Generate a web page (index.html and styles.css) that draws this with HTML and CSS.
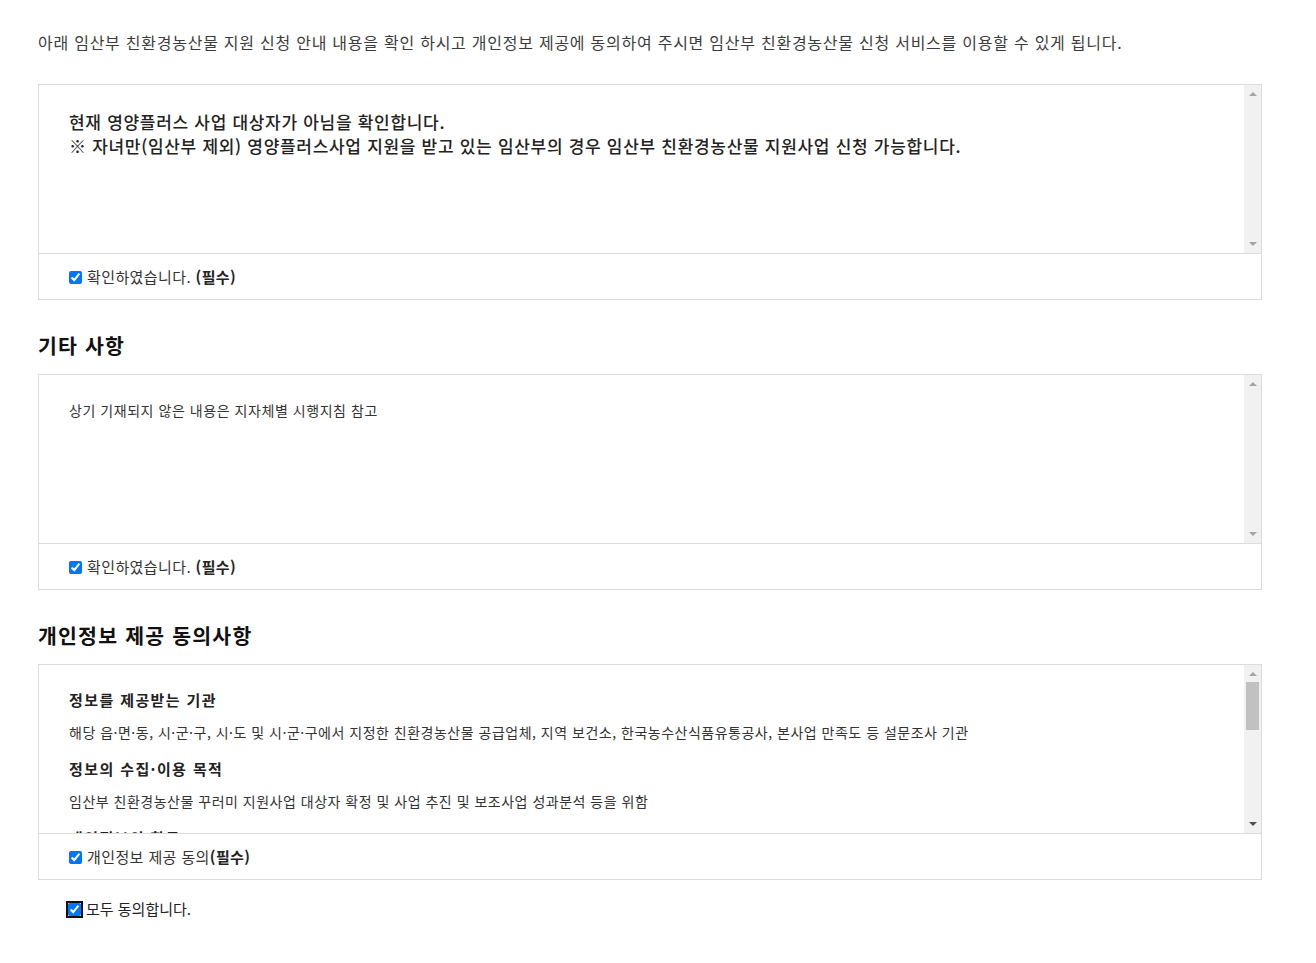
FILE: index.html
```html
<!DOCTYPE html>
<html lang="ko">

<head>
    <meta charset="UTF-8">
    <meta name="viewport" content="width=device-width, initial-scale=1.0">
    <title>임산부 친환경농산물 신청 동의</title>
    <link rel="stylesheet" href="styles.css">
</head>

<body>
    <div class="wrap">
        <p class="intro">아래 임산부 친환경농산물 지원 신청 안내 내용을 확인 하시고 개인정보 제공에 동의하여 주시면 임산부 친환경농산물 신청 서비스를 이용할 수 있게 됩니다.</p>

        <div class="agree-box">
            <div class="agree-body">
                <div class="agree-text">
                    <p class="notice">현재 영양플러스 사업 대상자가 아님을 확인합니다.<br>※ 자녀만(임산부 제외) 영양플러스사업 지원을 받고 있는 임산부의 경우 임산부 친환경농산물 지원사업 신청 가능합니다.</p>
                </div>
                <div class="scroll-bar">
                    <span class="arrow up"></span>
                    <span class="arrow down"></span>
                </div>
            </div>
            <label class="agree-check"><input type="checkbox" checked><span>확인하였습니다.&nbsp;<b>(필수)</b></span></label>
        </div>

        <h3 class="sec-title">기타 사항</h3>
        <div class="agree-box">
            <div class="agree-body">
                <div class="agree-text">
                    <p class="plain">상기 기재되지 않은 내용은 지자체별 시행지침 참고</p>
                </div>
                <div class="scroll-bar">
                    <span class="arrow up"></span>
                    <span class="arrow down"></span>
                </div>
            </div>
            <label class="agree-check"><input type="checkbox" checked><span>확인하였습니다.&nbsp;<b>(필수)</b></span></label>
        </div>

        <h3 class="sec-title">개인정보 제공 동의사항</h3>
        <div class="agree-box">
            <div class="agree-body">
                <div class="agree-text">
                    <dl class="terms">
                        <dt>정보를 제공받는 기관</dt>
                        <dd>해당 읍·면·동, 시·군·구, 시·도 및 시·군·구에서 지정한 친환경농산물 공급업체, 지역 보건소, 한국농수산식품유통공사, 본사업 만족도 등 설문조사 기관</dd>
                        <dt>정보의 수집·이용 목적</dt>
                        <dd>임산부 친환경농산물 꾸러미 지원사업 대상자 확정 및 사업 추진 및 보조사업 성과분석 등을 위함</dd>
                        <dt>개인정보의 항목</dt>
                        <dd>성명, 생년월일, 주소, 연락처, 출산예정일(출산일), 배송지 정보</dd>
                        <dt>개인정보의 보유 및 이용기간</dt>
                        <dd>사업 종료 후 5년간 보관 후 파기</dd>
                    </dl>
                </div>
                <div class="scroll-bar">
                    <span class="arrow up"></span>
                    <span class="thumb"></span>
                    <span class="arrow down on"></span>
                </div>
            </div>
            <label class="agree-check"><input type="checkbox" checked><span>개인정보 제공 동의<b>(필수)</b></span></label>
        </div>

        <label class="agree-all"><input type="checkbox" class="focused" checked><span>모두 동의합니다.</span></label>
    </div>
</body>

</html>
```

FILE: styles.css
```css
body {
    margin: 0;
    padding: 0;
    background-color: #ffffff;
    color: #222;
    font-family: "Noto Sans CJK KR", "Noto Sans", sans-serif;
}

.wrap {
    padding: 30px 54px 40px 38px;
}

.intro {
    margin: 0 0 30px;
    font-size: 16px;
    line-height: 24px;
    letter-spacing: 0.75px;
    color: #3c3c3c;
}

.agree-box {
    border: 1px solid #dcdcdc;
}

.agree-body {
    display: flex;
    height: 168px;
}

.agree-text {
    flex: 1;
    overflow: hidden;
    padding: 0 30px;
}

/* 스크롤바 모양 */
.scroll-bar {
    width: 17px;
    flex-shrink: 0;
    display: flex;
    flex-direction: column;
    align-items: center;
    background-color: #f1f1f1;
}

.arrow {
    width: 0;
    height: 0;
    border-left: 4px solid transparent;
    border-right: 4px solid transparent;
}

.arrow.up {
    margin-top: 7px;
    border-bottom: 4px solid #a3a3a3;
}

.arrow.down {
    margin-top: auto;
    margin-bottom: 7px;
    border-top: 4px solid #a3a3a3;
}

.arrow.down.on {
    border-top-color: #505050;
}

.thumb {
    width: 13px;
    height: 48px;
    margin-top: 6px;
    background-color: #c1c1c1;
}

.notice {
    margin: 25px 0 0;
    font-size: 17px;
    line-height: 24px;
    font-weight: 500;
    letter-spacing: 0.7px;
    color: #222;
}

.plain {
    margin: 23px 0 0;
    font-size: 14px;
    line-height: 24px;
    letter-spacing: 0.55px;
    color: #333;
}

.terms {
    margin: 24px 0 0;
}

.terms dt {
    font-size: 15px;
    line-height: 22px;
    font-weight: 700;
    letter-spacing: 1.4px;
    color: #222;
}

.terms dd {
    margin: 10px 0 15px;
    font-size: 14px;
    line-height: 22px;
    letter-spacing: 0.5px;
    color: #333;
}

.agree-check {
    display: flex;
    align-items: center;
    height: 46px;
    border-top: 1px solid #dcdcdc;
    padding: 0 0 1px 30px;
    box-sizing: border-box;
    font-size: 15px;
    letter-spacing: 0.4px;
    color: #333;
    user-select: none;
}

.agree-check b {
    color: #222;
}

.agree-check input,
.agree-all input {
    width: 13px;
    height: 13px;
    margin: 2px 5px 0 0;
}

.sec-title {
    margin: 31px 0 15px;
    font-size: 20.5px;
    line-height: 28px;
    font-weight: 700;
    letter-spacing: 1.2px;
    color: #111;
}

.agree-all {
    display: flex;
    align-items: center;
    height: 24px;
    margin-top: 16px;
    padding-left: 30px;
    font-size: 15px;
    color: #222;
}

.agree-all input {
    margin-right: 5px;
}

.agree-all input.focused {
    outline: 2px solid #101010;
    outline-offset: 0;
    border-radius: 3px;
}
```
